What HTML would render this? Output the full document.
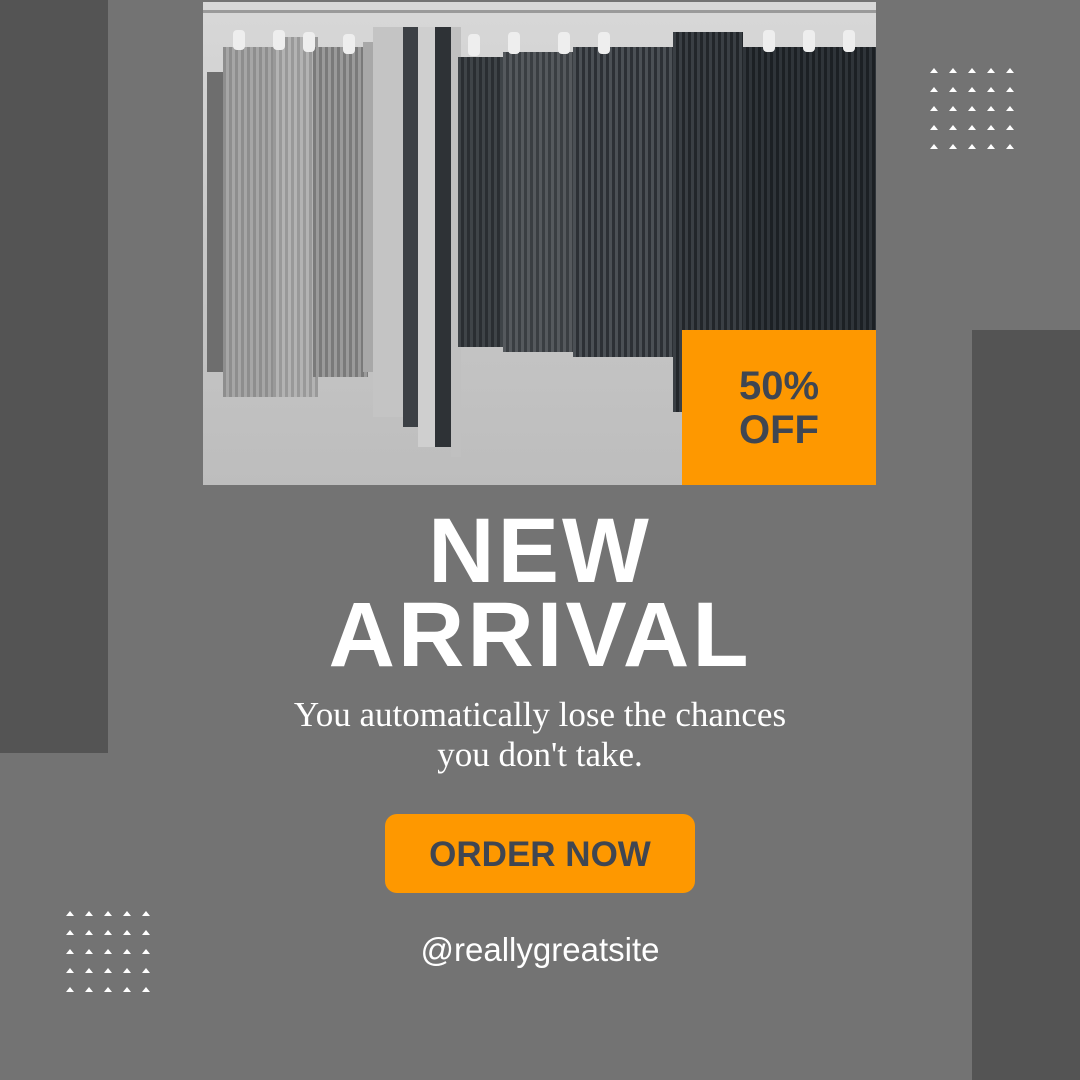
<!DOCTYPE html>
<html><head><style>
*{margin:0;padding:0;box-sizing:border-box}
body{width:1080px;height:1080px;background:#737373;position:relative;overflow:hidden;font-family:"Liberation Sans",sans-serif}
.a{position:absolute}
.tri{position:absolute;width:0;height:0;border-left:4px solid transparent;border-right:4px solid transparent;border-bottom:5px solid #fff}
.g{position:absolute}
</style></head><body>
<div class="a" style="left:0;top:0;width:108px;height:753px;background:#545454"></div>
<div class="a" style="left:972px;top:330px;width:108px;height:750px;background:#545454"></div>

<div class="a" style="left:203px;top:2px;width:673px;height:483px;background:linear-gradient(#d8d8d8,#c6c6c6 60%,#bdbdbd);overflow:hidden">
  <div class="a" style="left:0;top:8px;width:673px;height:3px;background:#9a9a9a"></div>
  <div class="g" style="left:4px;top:70px;width:20px;height:300px;background:#6e6e6e"></div>
  <div class="g" style="left:20px;top:45px;width:60px;height:350px;background:repeating-linear-gradient(90deg,#8e8e8e 0 3px,#a6a6a6 3px 6px)"></div>
  <div class="g" style="left:70px;top:35px;width:45px;height:360px;background:repeating-linear-gradient(90deg,#999 0 3px,#b3b3b3 3px 6px)"></div>
  <div class="g" style="left:110px;top:45px;width:55px;height:330px;background:repeating-linear-gradient(90deg,#7a7a7a 0 3px,#9a9a9a 3px 6px)"></div>
  <div class="g" style="left:160px;top:40px;width:25px;height:330px;background:#a8a8a8"></div>
  <div class="g" style="left:170px;top:25px;width:30px;height:390px;background:#c4c4c4"></div>
  <div class="g" style="left:200px;top:25px;width:20px;height:400px;background:#3c4045"></div>
  <div class="g" style="left:215px;top:25px;width:20px;height:420px;background:#cfcfcf"></div>
  <div class="g" style="left:232px;top:25px;width:20px;height:420px;background:#2e3236"></div>
  <div class="g" style="left:248px;top:25px;width:10px;height:430px;background:#c0c0c0"></div>
  <div class="g" style="left:255px;top:55px;width:65px;height:290px;background:repeating-linear-gradient(90deg,#3f4448 0 3px,#2a2e32 3px 6px)"></div>
  <div class="g" style="left:300px;top:50px;width:80px;height:300px;background:repeating-linear-gradient(90deg,#55595d 0 3px,#3a3e42 3px 6px)"></div>
  <div class="g" style="left:370px;top:45px;width:110px;height:310px;background:repeating-linear-gradient(90deg,#4b5055 0 3px,#2c3035 3px 6px)"></div>
  <div class="g" style="left:470px;top:30px;width:70px;height:380px;background:repeating-linear-gradient(90deg,#3a3f44 0 3px,#22262a 3px 6px)"></div>
  <div class="g" style="left:540px;top:45px;width:133px;height:300px;background:repeating-linear-gradient(90deg,#2f3439 0 3px,#1c2024 3px 6px)"></div>
  <div class="g" style="left:30px;top:28px;width:12px;height:20px;background:#eee;border-radius:4px"></div>
  <div class="g" style="left:70px;top:28px;width:12px;height:20px;background:#eee;border-radius:4px"></div>
  <div class="g" style="left:100px;top:30px;width:12px;height:20px;background:#eee;border-radius:4px"></div>
  <div class="g" style="left:140px;top:32px;width:12px;height:20px;background:#eee;border-radius:4px"></div>
  <div class="g" style="left:265px;top:32px;width:12px;height:22px;background:#eee;border-radius:4px"></div>
  <div class="g" style="left:305px;top:30px;width:12px;height:22px;background:#eee;border-radius:4px"></div>
  <div class="g" style="left:355px;top:30px;width:12px;height:22px;background:#eee;border-radius:4px"></div>
  <div class="g" style="left:395px;top:30px;width:12px;height:22px;background:#eee;border-radius:4px"></div>
  <div class="g" style="left:560px;top:28px;width:12px;height:22px;background:#eee;border-radius:4px"></div>
  <div class="g" style="left:600px;top:28px;width:12px;height:22px;background:#eee;border-radius:4px"></div>
  <div class="g" style="left:640px;top:28px;width:12px;height:22px;background:#eee;border-radius:4px"></div>
  <div class="a" style="left:479px;top:328px;width:194px;height:155px;background:#fe9800;color:#3f4652;font-weight:bold;font-size:40px;line-height:44px;text-align:center;padding-top:34px">50%<br>OFF</div>
</div>

<div class="a" style="left:0;width:1080px;top:509px;text-align:center;color:#fff;font-weight:bold;font-size:92px;line-height:84px;letter-spacing:3px">NEW<br>ARRIVAL</div>
<div class="a" style="left:0;width:1080px;top:695px;text-align:center;color:#fff;font-family:'Liberation Serif',serif;font-size:35px;line-height:40px">You automatically lose the chances<br>you don't take.</div>
<div class="a" style="left:385px;top:814px;width:310px;height:79px;background:#fe9800;border-radius:12px;color:#3f4652;font-weight:bold;font-size:35px;line-height:82px;text-align:center">ORDER NOW</div>
<div class="a" style="left:0;width:1080px;top:931px;text-align:center;color:#fff;font-size:33px">@reallygreatsite</div>

<script>
function grid(x,y){for(let r=0;r<5;r++)for(let c=0;c<5;c++){const d=document.createElement('div');d.className='tri';d.style.left=(x+c*19)+'px';d.style.top=(y+r*19)+'px';document.body.appendChild(d);}}
grid(930,68);grid(66,911);
</script>
</body></html>
